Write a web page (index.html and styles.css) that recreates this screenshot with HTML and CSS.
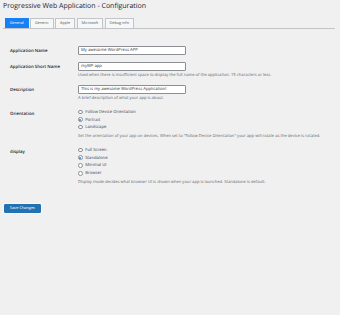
FILE: index.html
```html
<!DOCTYPE html>
<html lang="en">
<head>
<meta charset="utf-8">
<title>Progressive Web Application - Configuration</title>
<link rel="stylesheet" href="styles.css">
</head>
<body>
<div class="wrap">
  <h1 class="title">Progressive Web Application - Configuration</h1>
  <nav class="tabs">
    <a class="tab active">General</a>
    <a class="tab">Generic</a>
    <a class="tab">Apple</a>
    <a class="tab">Microsoft</a>
    <a class="tab">Debug info</a>
  </nav>
  <form class="form">
    <div class="table">
      <div class="row">
        <div class="th">Application Name</div>
        <div class="td"><input class="text" type="text" value="My awesome WordPress APP"></div>
      </div>
      <div class="row">
        <div class="th">Application Short Name</div>
        <div class="td">
          <input class="text" type="text" value="myWP app">
          <p class="desc">Used when there is insufficient space to display the full name of the application. 15 characters or less.</p>
        </div>
      </div>
      <div class="row">
        <div class="th">Description</div>
        <div class="td">
          <input class="text" type="text" value="This is my awesome WordPress Application!">
          <p class="desc">A brief description of what your app is about.</p>
        </div>
      </div>
      <div class="row">
        <div class="th th-list">Orientation</div>
        <div class="td">
          <div class="radios r-orient">
            <label class="opt"><span class="radio"></span>Follow Device Orientation</label>
            <label class="opt"><span class="radio on"></span>Portrait</label>
            <label class="opt"><span class="radio"></span>Landscape</label>
          </div>
          <p class="desc desc-list">Set the orientation of your app on devices. When set to "Follow Device Orientation" your app will rotate as the device is rotated.</p>
        </div>
      </div>
      <div class="row">
        <div class="th th-list">display</div>
        <div class="td">
          <div class="radios r-display">
            <label class="opt"><span class="radio"></span>Full Screen</label>
            <label class="opt"><span class="radio on"></span>Standalone</label>
            <label class="opt"><span class="radio"></span>Minimal UI</label>
            <label class="opt"><span class="radio"></span>Browser</label>
          </div>
          <p class="desc desc-list">Display mode decides what browser UI is shown when your app is launched. Standalone is default.</p>
        </div>
      </div>
    </div>
    <button class="button" type="button">Save Changes</button>
  </form>
</div>
</body>
</html>
```

FILE: styles.css
```css
html, body {
  margin: 0;
  padding: 0;
  background: #f0f0f1;
}
body {
  font-family: "Open Sans", "Noto Sans", sans-serif;
  text-rendering: geometricPrecision;
  color: #3c434a;
  width: 340px;
  height: 315px;
  overflow: hidden;
}
.wrap {
  padding: 0 5px 0 3px;
}
.title {
  margin: 2px 0 0 0;
  font-size: 7px;
  line-height: 10px;
  font-weight: 400;
  color: #1d2327;
}
.tabs {
  display: flex;
  gap: 1.7px;
  margin-top: 6px;
  padding-left: 2px;
  border-bottom: 1px solid #c3c4c7;
}
.tab {
  display: block;
  font-size: 3.8px;
  line-height: 9px;
  height: 9px;
  padding: 0 3.8px;
  border: 0.5px solid #c3c4c7;
  border-bottom: none;
  background: #f6f7f7;
  color: #50575e;
}
.tab.active {
  background: #1681f5;
  border-color: #1681f5;
  color: #ffffff;
}
.table {
  margin-top: 13px;
}
.row {
  display: flex;
  padding: 3.5px 0;
}
.th {
  width: 68px;
  padding-left: 7px;
  padding-top: 3px;
  font-size: 4.35px;
  line-height: 4.5px;
  font-weight: 600;
  color: #1d2327;
  box-sizing: content-box;
}
.th-list {
  padding-top: 4px;
}
.td {
  flex: 1;
}
.text {
  display: block;
  box-sizing: border-box;
  width: 108px;
  height: 9px;
  margin: 0;
  padding: 0 2px;
  font-family: "Open Sans", "Noto Sans", sans-serif;
  text-rendering: geometricPrecision;
  font-size: 4.2px;
  color: #2c3338;
  background: #ffffff;
  border: 0.5px solid #8c8f94;
  border-radius: 1px;
  outline: none;
}
.desc {
  margin: 3px 0 0 0;
  font-size: 4.1px;
  line-height: 4.4px;
  color: #646970;
}
.desc-list {
  margin-top: 4px;
}
.radios {
  display: flex;
  flex-direction: column;
}
.r-orient .opt {
  height: 7.5px;
}
.r-display .opt {
  height: 7.7px;
}
.opt {
  display: flex;
  align-items: center;
  gap: 2.4px;
  font-size: 4.25px;
  color: #3c434a;
}
.radio {
  display: block;
  box-sizing: border-box;
  width: 4.8px;
  height: 4.8px;
  border: 0.5px solid #8c8f94;
  border-radius: 50%;
  background: #ffffff;
  position: relative;
}
.radio.on::after {
  content: "";
  position: absolute;
  left: 50%;
  top: 50%;
  width: 2px;
  height: 2px;
  margin: -1px 0 0 -1px;
  border-radius: 50%;
  background: #3582c4;
}
.button {
  display: block;
  margin: 15px 0 0 1px;
  height: 9px;
  padding: 0 5px;
  font-family: "Open Sans", "Noto Sans", sans-serif;
  text-rendering: geometricPrecision;
  font-size: 3.9px;
  line-height: 8px;
  color: #ffffff;
  background: #2271b1;
  border: 0.5px solid #2271b1;
  border-radius: 1px;
  box-shadow: 0 0 0 0.6px #ffffff;
}
```
